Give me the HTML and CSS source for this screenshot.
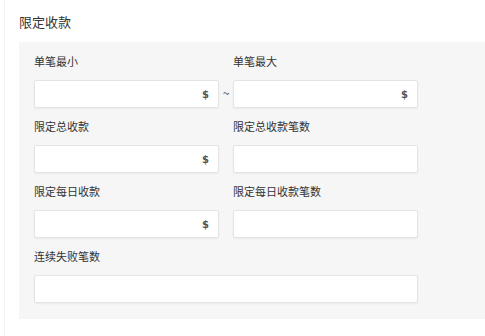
FILE: index.html
```html
<!doctype html>
<html>
<head>
<meta charset="utf-8">
<title>限定收款</title>
<link rel="stylesheet" href="styles.css">
</head>
<body>
<div class="page">
	<div class="title">限定收款</div>
	<div class="panel">
		<div class="grid">
			<div class="field">
				<label>单笔最小</label>
				<div class="box"><span class="unit">$</span></div>
			</div>
			<div class="sep">~</div>
			<div class="field">
				<label>单笔最大</label>
				<div class="box"><span class="unit">$</span></div>
			</div>

			<div class="field">
				<label>限定总收款</label>
				<div class="box"><span class="unit">$</span></div>
			</div>
			<div></div>
			<div class="field">
				<label>限定总收款笔数</label>
				<div class="box"></div>
			</div>

			<div class="field">
				<label>限定每日收款</label>
				<div class="box"><span class="unit">$</span></div>
			</div>
			<div></div>
			<div class="field">
				<label>限定每日收款笔数</label>
				<div class="box"></div>
			</div>

			<div class="field wide">
				<label>连续失败笔数</label>
				<div class="box"></div>
			</div>
		</div>
	</div>
</div>
</body>
</html>
```
FILE: styles.css
```css
body {
	margin: 0;
	padding-left: 4px;
	background: #ffffff;
	font-family: "Noto Sans CJK SC", "Noto Sans", sans-serif;
	color: #333333;
}

.page {
	border-left: 1px solid #f3f3f3;
	padding-left: 14px;
	height: 336px;
	box-sizing: border-box;
}

.title {
	font-size: 13px;
	line-height: 18px;
	padding-top: 13px;
	height: 29px;
	box-sizing: border-box;
}

.panel {
	margin-top: 13px;
	background: #f6f6f6;
	padding: 11px 0 16px 15px;
}

.grid {
	display: grid;
	grid-template-columns: 185px 14px 185px;
	row-gap: 10px;
}

.field label {
	display: block;
	font-size: 11px;
	line-height: 16px;
	margin-bottom: 11px;
}

.wide {
	grid-column: 1 / 4;
}

.box {
	height: 28px;
	box-sizing: border-box;
	background: #ffffff;
	border: 1px solid #e4e4e4;
	border-radius: 2px;
	box-shadow: 0 1px 2px rgba(0, 0, 0, 0.05);
	display: flex;
	align-items: center;
	justify-content: flex-end;
	padding-right: 9px;
}

.unit {
	font-family: "DejaVu Sans", sans-serif;
	font-size: 10px;
	font-weight: bold;
	color: #555555;
}

.sep {
	align-self: end;
	height: 28px;
	line-height: 26px;
	text-align: center;
	font-size: 12px;
	color: #444444;
}
```
